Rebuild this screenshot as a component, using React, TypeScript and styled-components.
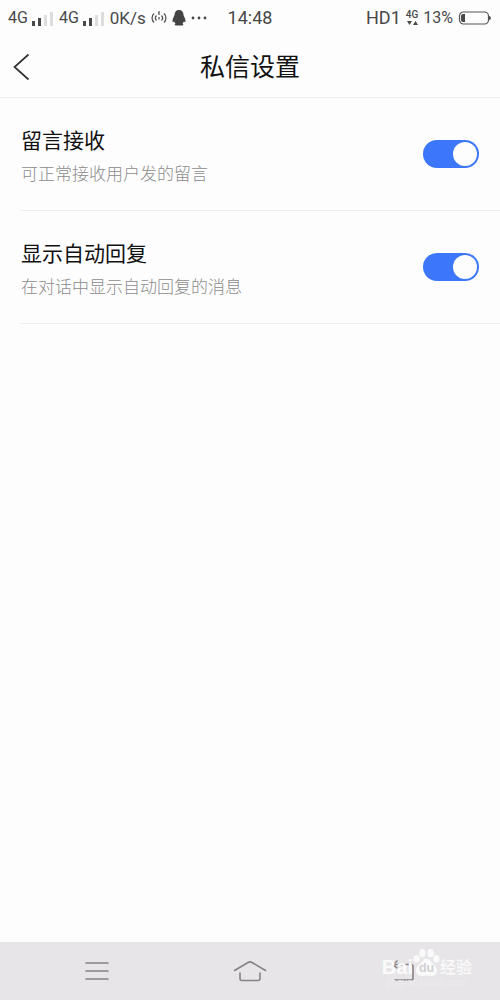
import React from "react";
import styled, { createGlobalStyle } from "styled-components";

const GlobalStyle = createGlobalStyle`
  * { box-sizing: border-box; }
  body {
    margin: 0;
    background: #fdfdfd;
    font-family: Roboto, "Noto Sans CJK SC", sans-serif;
  }
`;

const Page = styled.div`
  min-height: 100vh;
  display: flex;
  flex-direction: column;
  background: #fdfdfd;
`;

const StatusBar = styled.div`
  height: 35px;
  padding: 0 8px;
  display: grid;
  grid-template-columns: 1fr auto 1fr;
  align-items: center;
  color: #484848;
`;

const StatusGroup = styled.div<{ $end?: boolean }>`
  display: flex;
  align-items: center;
  justify-content: ${(p) => (p.$end ? "flex-end" : "flex-start")};
  gap: 5px;
  white-space: nowrap;
  svg { display: block; flex: none; }
`;

const StatusText = styled.span<{ $size?: number }>`
  font-size: ${(p) => p.$size ?? 16}px;
  line-height: 20px;
`;

const Carrier = styled.span`
  display: flex;
  align-items: center;
  gap: 3px;
`;

const DataType = styled.span`
  display: flex;
  flex-direction: column;
  align-items: center;
  font-size: 10px;
  line-height: 10px;
  font-weight: 500;
`;

const Header = styled.header`
  height: 63px;
  padding: 2px 12px 0;
  display: grid;
  grid-template-columns: 1fr auto 1fr;
  align-items: center;
  border-bottom: 1px solid #ececec;
`;

const BackButton = styled.button`
  justify-self: start;
  padding: 0;
  border: 0;
  background: none;
  cursor: pointer;
  svg { display: block; }
`;

const Title = styled.h1`
  margin: 0;
  padding-top: 2px;
  font-size: 25px;
  line-height: 32px;
  font-weight: 400;
  color: #111;
`;

const Settings = styled.main`
  flex: 1;
  padding-left: 21px;
`;

const Row = styled.label`
  height: 113px;
  padding-right: 21px;
  display: flex;
  align-items: center;
  justify-content: space-between;
  border-bottom: 1px solid #eee;
  cursor: pointer;
`;

const RowText = styled.span`
  display: flex;
  flex-direction: column;
  gap: 6px;
  padding-top: 4px;
`;

const RowTitle = styled.span`
  font-size: 21px;
  line-height: 30px;
  color: #111;
`;

const RowHint = styled.span`
  font-size: 17px;
  line-height: 24px;
  font-weight: 300;
  color: #8c8c8c;
`;

const Switch = styled.input`
  appearance: none;
  flex: none;
  width: 56px;
  height: 28px;
  margin: 0;
  padding: 2px;
  display: flex;
  justify-content: flex-start;
  border-radius: 14px;
  background: #ccc;
  cursor: pointer;
  &::before {
    content: "";
    width: 24px;
    height: 24px;
    border-radius: 50%;
    background: #fdfdfd;
  }
  &:checked {
    justify-content: flex-end;
    background: #3c76fa;
  }
`;

const NavBar = styled.nav`
  position: relative;
  height: 58px;
  padding: 0 21px;
  display: grid;
  grid-template-columns: repeat(3, 1fr);
  background: #e7e5e8;
`;

const NavButton = styled.button`
  padding: 0;
  border: 0;
  background: none;
  display: flex;
  align-items: center;
  justify-content: center;
  cursor: pointer;
`;

const Watermark = styled.div`
  position: absolute;
  right: 28px;
  bottom: 12px;
  color: #fafafa;
  text-align: center;
  pointer-events: none;
`;

const Brand = styled.div`
  display: flex;
  align-items: flex-end;
  font-family: "Liberation Sans", "Noto Sans CJK SC", sans-serif;
  font-size: 20px;
  line-height: 22px;
  font-weight: 700;
  svg { display: block; }
`;

const BrandName = styled.span`
  font-size: 16px;
  line-height: 20px;
  font-weight: 500;
`;

const Site = styled.div`
  font-size: 10px;
  line-height: 10px;
  color: #edebee;
`;

const Signal = () => (
  <Carrier>
    <StatusText>4G</StatusText>
    <svg width="23" height="16" viewBox="0 0 23 16">
      <path d="M1 11h3v5H1zM7 8h3v8H7z" fill="#484848" />
      <path d="M13 5h3v11h-3zM19 2h3v14h-3z" fill="#ddd" />
    </svg>
  </Carrier>
);

const items = [
  { title: "留言接收", hint: "可正常接收用户发的留言" },
  { title: "显示自动回复", hint: "在对话中显示自动回复的消息" },
];

export default function App() {
  return (
    <Page>
      <GlobalStyle />
      <StatusBar>
        <StatusGroup>
          <Signal />
          <Signal />
          <StatusText $size={17}>0K/s</StatusText>
          <svg width="16" height="14" viewBox="0 0 16 14" fill="none" stroke="#555" strokeWidth="1.3">
            <path d="M3 2.500C.4 5 .4 9 3 11.500M5.500 4.500c-1.400 1.500-1.400 3.500 0 5M13 2.500c2.600 2.500 2.600 6.500 0 9M10.500 4.500c1.400 1.500 1.400 3.500 0 5M7 1.500l1-.5v3M8 6v2.500" />
          </svg>
          <svg width="14" height="16" viewBox="0 0 14 16" fill="#444">
            <path d="M7 0C4 0 2.500 2 2.500 5 2 6.500.5 8.500.5 11c0 1.500.8 1.500 1.500.3.3 1 .8 1.700 1.500 2.300-1 .4-1.300 2 .5 2h6c1.800 0 1.500-1.600.5-2 .7-.6 1.200-1.300 1.500-2.300.7 1.200 1.500 1.200 1.500-.3 0-2.500-1.500-4.500-2-6C11.500 2 10 0 7 0z" />
          </svg>
          <svg width="16" height="4" viewBox="0 0 16 4" fill="#484848">
            <circle cx="2" cy="2" r="1.400" />
            <circle cx="8" cy="2" r="1.400" />
            <circle cx="14" cy="2" r="1.400" />
          </svg>
        </StatusGroup>
        <StatusText $size={18}>14:48</StatusText>
        <StatusGroup $end>
          <StatusText $size={18}>HD1</StatusText>
          <DataType>
            4G
            <svg width="11" height="6" viewBox="0 0 11 6" fill="#484848">
              <path d="M0 1h5L2.500 5zM6 5h5L8.500 1z" />
            </svg>
          </DataType>
          <StatusText>13%</StatusText>
          <svg width="34" height="14" viewBox="0 0 34 14">
            <rect x="1.500" y="1" width="29" height="12" rx="4" fill="none" stroke="#555" strokeWidth="1.200" />
            <path d="M5 3h2v8H5a2 2 0 0 1-2-2V5a2 2 0 0 1 2-2zM31 5c2.500 0 2.500 4 0 4z" fill="#484848" />
          </svg>
        </StatusGroup>
      </StatusBar>

      <Header>
        <BackButton aria-label="返回">
          <svg width="18" height="28" viewBox="0 0 18 28" fill="none" stroke="#333" strokeWidth="1.700">
            <path d="M16.500 1.500 2.500 14l14 12.500" />
          </svg>
        </BackButton>
        <Title>私信设置</Title>
      </Header>

      <Settings>
        {items.map((item) => (
          <Row key={item.title}>
            <RowText>
              <RowTitle>{item.title}</RowTitle>
              <RowHint>{item.hint}</RowHint>
            </RowText>
            <Switch type="checkbox" role="switch" defaultChecked />
          </Row>
        ))}
      </Settings>

      <NavBar>
        <NavButton aria-label="菜单">
          <svg width="24" height="20" viewBox="0 0 24 20" stroke="#858386" strokeWidth="1.600" strokeLinecap="round">
            <path d="M1 2h22M1 10h22M1 18h22" />
          </svg>
        </NavButton>
        <NavButton aria-label="主页">
          <svg width="34" height="22" viewBox="0 0 34 22" fill="none" stroke="#858386" strokeWidth="1.600" strokeLinecap="round" strokeLinejoin="round">
            <path d="M1.500 10.500 15 2.500q2-1.200 4 0l13.500 8M7 13v5.500q0 2 2 2h16q2 0 2-2V13" />
          </svg>
        </NavButton>
        <NavButton aria-label="后退">
          <svg width="24" height="22" viewBox="0 0 24 22" fill="none" stroke="#858386" strokeWidth="1.600" strokeLinecap="round" strokeLinejoin="round">
            <path d="M6 1 2 4.500 6 8M2 4.500h18q2 0 2 2V18q0 2-2 2H4" />
          </svg>
        </NavButton>
        <Watermark>
          <Brand>
            Bai
            <svg width="27" height="30" viewBox="0 0 26 28">
              <g fill="#fafafa">
                <ellipse cx="3.500" cy="10" rx="3" ry="3.600" />
                <ellipse cx="9" cy="4.500" rx="3" ry="4" />
                <ellipse cx="17" cy="4.500" rx="3" ry="4" />
                <ellipse cx="22.500" cy="10" rx="3" ry="3.600" />
                <path d="M13 10c-3 0-4 3-7 5.500-5 4-3.500 11 2 11 2 0 3-.5 5-.5s3 .5 5 .5c5.500 0 7-7 2-11C17 13 16 10 13 10z" />
              </g>
              <text x="13" y="23" textAnchor="middle" fontSize="12" fill="#d3d1d5">du</text>
            </svg>
            <BrandName>经验</BrandName>
          </Brand>
          <Site>jingyan.baidu.com</Site>
        </Watermark>
      </NavBar>
    </Page>
  );
}
